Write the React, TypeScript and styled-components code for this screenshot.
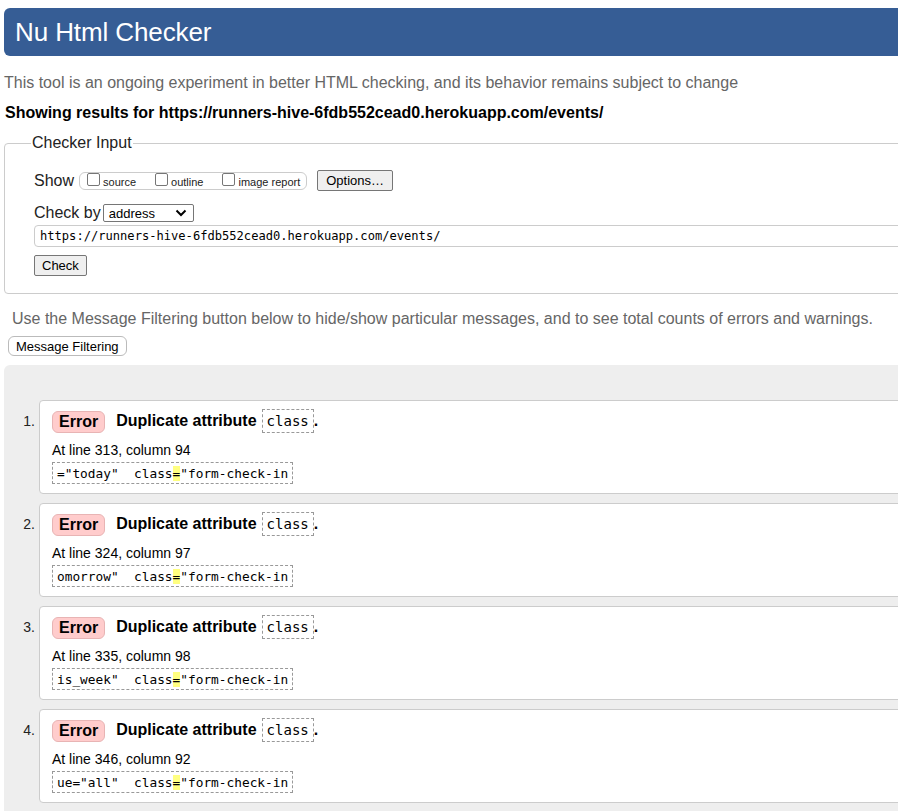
import React from "react";
import styled, { createGlobalStyle } from "styled-components";

const Global = createGlobalStyle`
  html, body { margin: 0; padding: 0; overflow: hidden; background: #fff; }
  body { font-family: "Liberation Sans", Arial, sans-serif; color: #000; }
  * { box-sizing: border-box; }
`;

const Page = styled.div`
  width: 1020px;
  padding: 8px 0 0 4px;
`;

const Header = styled.header`
  height: 48px;
  background: #365d95;
  border-radius: 6px;
  padding-left: 11px;
  display: flex;
  align-items: center;
`;

const Title = styled.h1`
  margin: 0;
  font-size: 26px;
  font-weight: normal;
  color: #fff;
  letter-spacing: -0.1px;
`;

const Tagline = styled.p`
  margin: 17px 0 0 0;
  font-size: 16px;
  line-height: 19px;
  color: #666;
`;

const Results = styled.p`
  margin: 11px 0 0 1px;
  font-size: 16px;
  line-height: 19px;
  font-weight: bold;
`;

const Fieldset = styled.fieldset`
  margin: 12px 0 0 0;
  border: 1px solid #ccc;
  border-radius: 4px;
  padding: 6px 0 17px 29px;
`;

const Legend = styled.legend`
  font-size: 16px;
  padding: 0 1px;
  margin-left: -3px;
  color: #222;
`;

const Row = styled.div<{ $mt?: number }>`
  display: flex;
  align-items: center;
  margin-top: ${(p) => p.$mt ?? 0}px;
  font-size: 16px;
  color: #222;
`;

const Label = styled.span<{ $gap?: number }>`
  margin-right: ${(p) => p.$gap ?? 5}px;
`;

const CheckGroup = styled.span`
  display: inline-flex;
  align-items: center;
  height: 18px;
  border: 1px solid #ccc;
  border-radius: 6px;
  padding: 0 6px 0 7px;
  font-size: 11px;
  margin-right: 10px;
`;

const CheckItem = styled.label<{ $last?: boolean }>`
  display: inline-flex;
  align-items: center;
  margin-right: ${(p) => (p.$last ? 0 : 19)}px;
  color: #222;
  padding-top: 2px;
`;

const Box = styled.span`
  width: 13px;
  height: 13px;
  border: 1px solid #767676;
  border-radius: 2px;
  background: #fff;
  margin-right: 3px;
  margin-top: -5px;
`;

const Button = styled.button<{ $round?: boolean; $white?: boolean; $h?: number }>`
  font-family: "Liberation Sans", Arial, sans-serif;
  font-size: 13px;
  height: ${(p) => p.$h ?? 21}px;
  padding: 0 7px;
  color: #000;
  background: ${(p) => (p.$white ? "#fff" : "#efefef")};
  border: 1px solid ${(p) => (p.$round ? "#bbb" : "#767676")};
  border-radius: ${(p) => (p.$round ? 6 : 2)}px;
`;

const OptionsButton = styled(Button)`
  padding: 0 8px;
`;

const Select = styled.span`
  display: inline-flex;
  align-items: center;
  justify-content: space-between;
  width: 91px;
  height: 18px;
  border: 1px solid #767676;
  border-radius: 2px;
  padding: 0 6px 0 5px;
  font-size: 13px;
  color: #000;
`;

const UrlInput = styled.div`
  margin-top: 3px;
  height: 22px;
  border: 1px solid #ccc;
  border-radius: 4px;
  padding-left: 5px;
  display: flex;
  align-items: center;
  font-family: "DejaVu Sans Mono", "Liberation Mono", monospace;
  font-size: 12.1px;
  color: #000;
`;

const Note = styled.p`
  margin: 15px 0 0 8px;
  font-size: 16px;
  line-height: 19px;
  color: #666;
`;

const FilterRow = styled.div`
  display: flex;
  margin: 8px 0 0 4px;
`;

const ResultsArea = styled.section`
  margin-top: 9px;
  background: #eee;
  border-radius: 6px;
  padding: 35px 0 20px 0;
`;

const List = styled.ol`
  list-style: none;
  margin: 0;
  padding: 0;
  display: flex;
  flex-direction: column;
  gap: 9px;
`;

const Item = styled.li`
  display: flex;
  align-items: flex-start;
`;

const Num = styled.span`
  width: 35px;
  flex: none;
  text-align: right;
  padding-right: 4px;
  padding-top: 13px;
  font-size: 14px;
  color: #222;
`;

const Card = styled.div`
  flex: 1;
  height: 94px;
  background: #fff;
  border: 1px solid #ccc;
  border-radius: 4px;
  padding: 8px 0 0 12px;
`;

const MsgLine = styled.div`
  display: flex;
  align-items: center;
  font-size: 16px;
  font-weight: bold;
`;

const Badge = styled.span`
  display: inline-flex;
  align-items: center;
  height: 22px;
  padding: 0 6px 0 6px;
  background: #fcc;
  border: 1px solid #e8b4b4;
  border-radius: 6px;
  margin-right: 11px;
  margin-top: 1px;
`;

const CodeBox = styled.code`
  display: inline-flex;
  align-items: center;
  height: 24px;
  margin-left: 5px;
  padding: 0 4px 0 4px;
  border: 1px dashed #999;
  font-family: "DejaVu Sans Mono", "Liberation Mono", monospace;
  font-size: 14px;
  font-weight: normal;
`;

const Location = styled.p`
  margin: 9px 0 0 0;
  font-size: 14px;
  line-height: 17px;
  color: #000;
`;

const Extract = styled.div`
  display: inline-flex;
  align-items: center;
  margin-top: 3px;
  height: 22px;
  padding: 0 4px;
  border: 1px dashed #999;
  font-family: "DejaVu Sans Mono", "Liberation Mono", monospace;
  font-size: 12.8px;
  white-space: pre;
`;

const Mark = styled.mark`
  background: #ffff80;
  color: inherit;
`;

const errors = [
  { line: 313, col: 94, pre: '="today"  class' },
  { line: 324, col: 97, pre: 'omorrow"  class' },
  { line: 335, col: 98, pre: 'is_week"  class' },
  { line: 346, col: 92, pre: 'ue="all"  class' },
];

export default function App() {
  return (
    <>
      <Global />
      <Page>
        <Header>
          <Title>Nu Html Checker</Title>
        </Header>
        <Tagline>
          This tool is an ongoing experiment in better HTML checking, and its behavior remains subject to change
        </Tagline>
        <Results>Showing results for https://runners-hive-6fdb552cead0.herokuapp.com/events/</Results>
        <Fieldset>
          <Legend>Checker Input</Legend>
          <Row $mt={12}>
            <Label>Show</Label>
            <CheckGroup>
              <CheckItem>
                <Box />
                source
              </CheckItem>
              <CheckItem>
                <Box />
                outline
              </CheckItem>
              <CheckItem $last>
                <Box />
                image report
              </CheckItem>
            </CheckGroup>
            <OptionsButton>Options…</OptionsButton>
          </Row>
          <Row $mt={13}>
            <Label $gap={2}>Check by</Label>
            <Select>
              address
              <svg width="12" height="8" viewBox="0 0 12 8">
                <path d="M1.5 1.5 L6 6 L10.5 1.5" fill="none" stroke="#000" strokeWidth="2" />
              </svg>
            </Select>
          </Row>
          <UrlInput>https://runners-hive-6fdb552cead0.herokuapp.com/events/</UrlInput>
          <Row $mt={8}>
            <Button>Check</Button>
          </Row>
        </Fieldset>
        <Note>
          Use the Message Filtering button below to hide/show particular messages, and to see total counts of errors and warnings.
        </Note>
        <FilterRow>
          <Button $round $white $h={20}>Message Filtering</Button>
        </FilterRow>
        <ResultsArea>
          <List>
            {errors.map((e, i) => (
              <Item key={i}>
                <Num>{i + 1}.</Num>
                <Card>
                  <MsgLine>
                    <Badge>Error</Badge>
                    Duplicate attribute
                    <CodeBox>class</CodeBox>.
                  </MsgLine>
                  <Location>
                    At line {e.line}, column {e.col}
                  </Location>
                  <Extract>
                    {e.pre}
                    <Mark>=</Mark>
                    {'"form-check-in'}
                  </Extract>
                </Card>
              </Item>
            ))}
          </List>
        </ResultsArea>
      </Page>
    </>
  );
}
